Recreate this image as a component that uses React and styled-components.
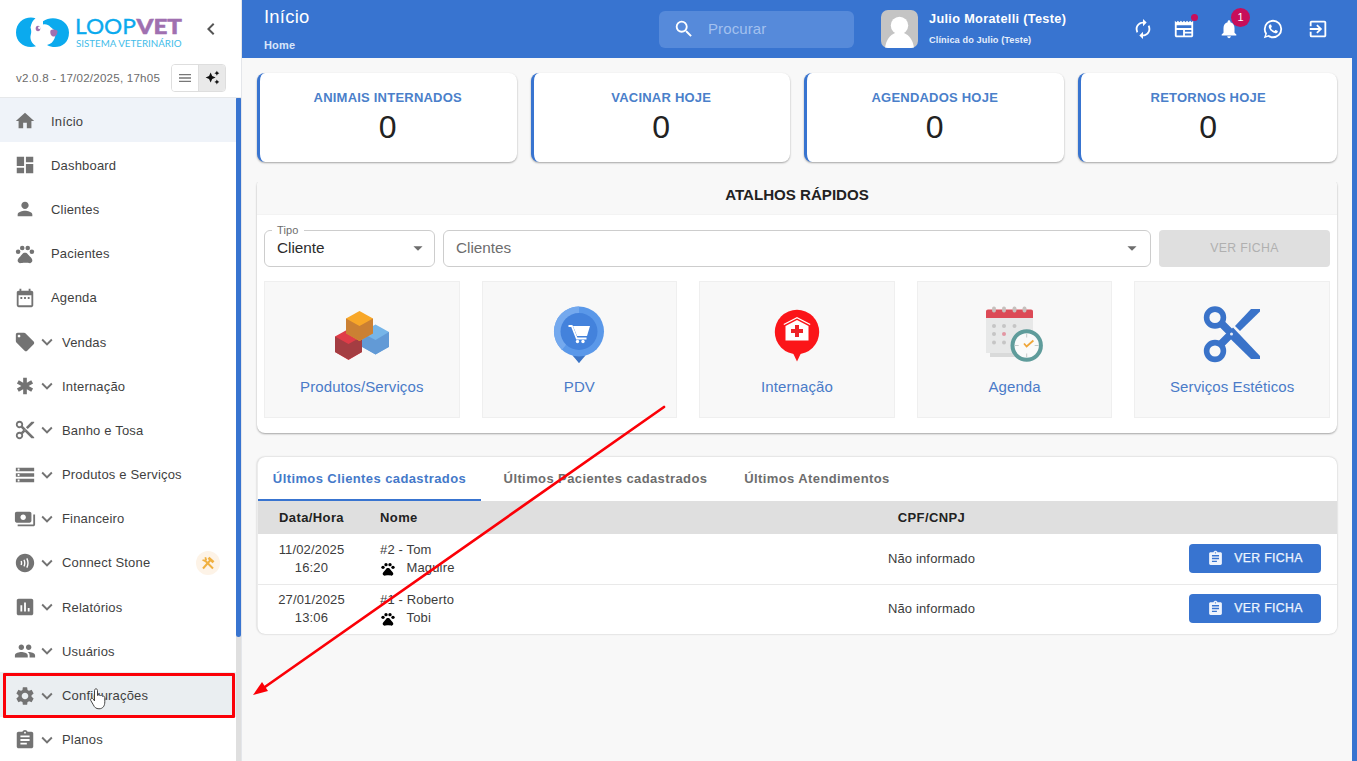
import React from "react";
import styled, { createGlobalStyle } from "styled-components";
import {
  MdHome, MdDashboard, MdPerson, MdPets, MdDateRange, MdLocalOffer, MdEmergency,
  MdContentCut, MdStorage, MdPayments, MdContactless, MdAssessment, MdPeople,
  MdSettings, MdAssignment, MdExpandMore, MdChevronLeft, MdMenu, MdAutoAwesome,
  MdSearch, MdAutorenew, MdNewspaper, MdNotifications, MdExitToApp,
  MdArrowDropDown,
} from "react-icons/md";

const blue = "#3874d0";

const GlobalStyle = createGlobalStyle`
  * { box-sizing: border-box; }
  body { margin: 0; font-family: "Liberation Sans", Arial, sans-serif; background: #f8f8f8; color: #3c3c3c; overflow: hidden; }
  svg { display: block; flex: none; }
`;

const Page = styled.div`
  position: relative;
  display: flex;
  width: 1357px;
  height: 761px;
  overflow: hidden;
`;

/* Sidebar */
const Sidebar = styled.aside`
  display: flex;
  flex-direction: column;
  width: 242px;
  background: #fff;
  border-right: 1px solid #e4e6ea;
  flex: none;
`;
const Brand = styled.div`
  display: flex;
  align-items: center;
  height: 60px;
  padding: 0 18px 0 15px;
  justify-content: space-between;
  color: #555;
`;
const Collapse = styled(MdChevronLeft)`
  margin-bottom: 2px;
`;
const VersionRow = styled.div`
  display: flex;
  align-items: center;
  justify-content: space-between;
  height: 38px;
  padding: 0 15px 2px 16px;
  border-bottom: 1px solid #e6e8ea;
  font-size: 11.6px;
  letter-spacing: 0.21px;
  color: #6c6c6c;
  white-space: nowrap;
`;
const Toggle = styled.div`
  display: flex;
  width: 55px;
  height: 28px;
  border: 1px solid #dedede;
  border-radius: 4px;
  overflow: hidden;
`;
const ToggleButton = styled.div`
  flex: 1;
  display: grid;
  place-items: center;
  color: ${(p) => (p.$on ? "#111" : "#777")};
  background: ${(p) => (p.$on ? "#e9e9e9" : "#fff")};
  border-left: ${(p) => (p.$on ? "1px solid #dedede" : "0")};
`;
const MenuArea = styled.div`
  display: flex;
  flex: 1;
  min-height: 0;
`;
const Menu = styled.nav`
  flex: 1;
  overflow: hidden;
`;
const MenuItem = styled.div`
  display: flex;
  align-items: center;
  height: 44.2px;
  padding: 2px 16px 0 14px;
  font-size: 13px;
  letter-spacing: 0.18px;
  color: #3f3f3f;
  background: ${(p) => (p.$active ? "#eff3f9" : p.$hover ? "#eaeef1" : "transparent")};
  & > svg { color: #737373; }
`;
const MenuLabel = styled.span`
  margin-left: ${(p) => (p.$nested ? "4px" : "15px")};
  flex: 1;
`;
const BetaMark = styled.span`
  display: grid;
  place-items: center;
  width: 24px;
  height: 24px;
  border-radius: 50%;
  background: #fdf3e7;
`;
const Track = styled.div`
  width: 5px;
  background: #dfdfdf;
`;
const Thumb = styled.div`
  height: 539px;
  background: ${blue};
  border-radius: 1px 1px 3px 3px;
`;

/* Header */
const Main = styled.main`
  flex: 1;
  display: flex;
  flex-direction: column;
  min-width: 0;
`;
const Header = styled.header`
  display: flex;
  align-items: center;
  height: 58px;
  padding: 0 28px 0 22px;
  background: ${blue};
  color: #fff;
`;
const Titles = styled.div`
  width: 395px;
  display: flex;
  flex-direction: column;
  gap: 12px;
  padding-bottom: 1px;
`;
const Title = styled.div`
  font-size: 18.4px;
  line-height: 20px;
  letter-spacing: 0.25px;
`;
const Crumb = styled.div`
  font-size: 11px;
  line-height: 12px;
  font-weight: 700;
  letter-spacing: 0.15px;
  color: #d8e6fa;
`;
const SearchBox = styled.div`
  display: flex;
  align-items: center;
  gap: 13px;
  width: 195px;
  height: 37px;
  padding-left: 14px;
  border-radius: 6px;
  background: #568ada;
  font-size: 15px;
`;
const Placeholder = styled.span`
  color: #a3c1ef;
  letter-spacing: 0.1px;
  padding-bottom: 1px;
`;
const User = styled.div`
  display: flex;
  align-items: center;
  margin-left: 27px;
  gap: 11px;
  width: 251px;
`;
const UserText = styled.div`
  display: flex;
  flex-direction: column;
  gap: 7px;
  font-weight: 700;
  white-space: nowrap;
`;
const UserName = styled.div`
  font-size: 12.7px;
  line-height: 15px;
  letter-spacing: 0.34px;
`;
const Clinic = styled.div`
  font-size: 9.2px;
  line-height: 12px;
  letter-spacing: 0.1px;
  color: #e5eefb;
`;
const Actions = styled.div`
  display: grid;
  grid-template-columns: 41px 45px 44px 45px 22px;
  flex: 1;
  align-items: center;
`;
const Action = styled.div`
  position: relative;
  width: 22px;
`;
const Badge = styled.span`
  position: absolute;
  top: -10px;
  right: -10px;
  width: 19px;
  height: 19px;
  border-radius: 50%;
  background: #c70e5a;
  font-size: 11px;
  line-height: 19px;
  text-align: center;
`;
const Dot = styled.span`
  position: absolute;
  top: -4px;
  right: -3px;
  width: 7px;
  height: 7px;
  border-radius: 50%;
  background: #c70e5a;
`;

/* Content */
const Content = styled.div`
  flex: 1;
  padding: 15px 15px 0 15px;
  background: #f8f8f8;
  border-right: 5px solid ${blue};
`;
const Stats = styled.section`
  display: grid;
  grid-template-columns: repeat(4, 1fr);
  gap: 14px;
`;
const StatCard = styled.div`
  height: 89px;
  padding: 16px 1px 0 0;
  text-align: center;
  background: #fff;
  border-left: 3px solid ${blue};
  border-radius: 8px;
  box-shadow: 0 1px 2px rgba(0, 0, 0, 0.34);
`;
const StatLabel = styled.div`
  font-size: 13px;
  line-height: 18px;
  font-weight: 700;
  letter-spacing: 0.22px;
  color: #4a7fca;
`;
const StatValue = styled.div`
  margin-top: 1px;
  font-size: 32px;
  line-height: 39px;
  color: #222;
`;
const Panel = styled.section`
  border-radius: 8px;
  background: #fff;
  box-shadow: 0 1px 2px rgba(0, 0, 0, 0.34);
  overflow: hidden;
`;
const Shortcuts = styled(Panel)`
  margin-top: 16px;
  height: 255px;
  clip-path: inset(4px -3px -4px -3px);
`;
const PanelTitle = styled.div`
  height: 37px;
  background: #f8f8f8;
  border-bottom: 1px solid #f3f3f3;
  text-align: center;
  font-size: 15.1px;
  font-weight: 700;
  line-height: 34px;
  color: #222;
`;
const Filters = styled.div`
  display: flex;
  gap: 8px;
  padding: 15px 7px 14px;
`;
const Field = styled.div`
  position: relative;
  display: flex;
  align-items: center;
  justify-content: space-between;
  width: ${(p) => p.$width};
  height: 37px;
  padding: ${(p) => (p.$muted ? "0 7px 1px 12px" : "0 5px 2px 12px")};
  border: 1px solid #cdcdcd;
  border-radius: 6px;
  font-size: 15.3px;
  color: ${(p) => (p.$muted ? "#6d6d6d" : "#2c2c2c")};
  & > svg { color: #6d6d6d; }
`;
const FieldLabel = styled.span`
  position: absolute;
  top: -8px;
  left: 7px;
  padding: 0 5px;
  background: #fff;
  font-size: 11px;
  line-height: 14px;
  letter-spacing: 0.15px;
  color: #6d6d6d;
`;
const DisabledButton = styled.div`
  flex: 1;
  height: 37px;
  border-radius: 4px;
  background: #dfdfdf;
  color: #b0b0b0;
  font-size: 12.3px;
  line-height: 36px;
  letter-spacing: 0.3px;
  text-align: center;
`;
const Tiles = styled.div`
  display: grid;
  grid-template-columns: repeat(5, 1fr);
  gap: 22px;
  padding: 0 7px;
`;
const Tile = styled.div`
  display: flex;
  flex-direction: column;
  align-items: center;
  height: 137px;
  padding-top: 20px;
  border: 1px solid #efefef;
  background: #f8f8f8;
  color: #4a7bc8;
  font-size: 15px;
  line-height: 20px;
  letter-spacing: 0.1px;
`;
const TileArt = styled.div`
  height: 75px;
`;

const Records = styled(Panel)`
  margin-top: 24px;
  height: 177px;
  border-left: 1px solid #ececec;
  box-shadow: 0 0 2px rgba(0, 0, 0, 0.26);
`;
const Tabs = styled.div`
  display: flex;
  height: 44px;
`;
const Tab = styled.div`
  width: ${(p) => p.$width};
  height: 44px;
  line-height: 43px;
  text-align: center;
  white-space: nowrap;
  font-size: 13px;
  font-weight: 700;
  letter-spacing: 0.4px;
  color: ${(p) => (p.$active ? "#4479c9" : "#6d6d6d")};
  border-bottom: ${(p) => (p.$active ? `2px solid ${blue}` : "0")};
`;
const Row = styled.div`
  display: grid;
  grid-template-columns: 107px 400px 333px 1fr;
  align-items: center;
  height: ${(p) => (p.$head ? "33px" : p.$divided ? "50.5px" : "48.5px")};
  background: ${(p) => (p.$head ? "#dfdfdf" : "#fff")};
  border-bottom: ${(p) => (p.$divided ? "1px solid #e9e9e9" : "0")};
  font-size: 13px;
  line-height: 18.6px;
  font-weight: ${(p) => (p.$head ? 700 : 400)};
  letter-spacing: ${(p) => (p.$head ? "0.4px" : "0.15px")};
  color: ${(p) => (p.$head ? "#222" : "#3c3c3c")};
`;
const Cell = styled.div`
  text-align: ${(p) => (p.$center ? "center" : "left")};
  padding: 1px 0 0 ${(p) => (p.$center ? "0" : "15px")};
`;
const Pet = styled.div`
  display: flex;
  align-items: center;
  gap: 10.5px;
  & > svg { color: #000; }
`;
const RecordButton = styled.div`
  display: flex;
  align-items: center;
  justify-content: center;
  gap: 10px;
  width: 132px;
  height: 29px;
  margin-left: 91px;
  border-radius: 4px;
  background: ${blue};
  color: #eef4fd;
  font-size: 12.3px;
  letter-spacing: 0.3px;
  -webkit-text-stroke: 0.25px #eef4fd;
`;

/* Annotations lie over the page */
const Highlight = styled.div`
  position: absolute;
  left: 3px;
  top: 673px;
  width: 232px;
  height: 45px;
  border: 3px solid #fb0007;
  border-radius: 1px;
`;
const Overlay = styled.svg`
  position: absolute;
  left: 0;
  top: 0;
  pointer-events: none;
`;

const Logo = () => (
  <svg width="170" height="46" viewBox="0 -6 170 46">
    <path fill="#0baaee" d="M20.500 5.200C11 2.500 1 8.500 1 19.500S11 36 21 33.200c-4.500-3-6.300-7-5.300-11.200 1-3 .5-5-.2-7.500.500-4 2.500-7.500 5-9.300z" />
    <path fill="#0baaee" d="M28 8.200C37 1.500 54 6 54 19.500S41 37 32 32c4-1 6-3 7.500-6.500l2-6.500-6-5c-2-2.300-4.500-3-7.500-2.500z" />
    <ellipse cx="23" cy="15.500" rx="2.300" ry="2.800" fill="#a070b0" />
    <circle cx="24.300" cy="14.800" r="1.200" fill="#fff" />
    <path fill="#a070b0" d="M35.500 17.500c1.500-1.500 5-1.500 7 .5 0 3.500-2 6-4.500 5.500-1.800-.5-3.300-3-2.500-6z" />
    <text x="60" y="20.700" fontFamily="Lato, sans-serif" fontSize="20.700" fill="#0baaee" stroke="#0baaee" strokeWidth="0.3" textLength="61" lengthAdjust="spacingAndGlyphs">LOOP</text>
    <text x="121.500" y="20.700" fontFamily="Lato, sans-serif" fontWeight="900" fontSize="20.700" fill="#a070b0" stroke="#a070b0" strokeWidth="0.5" textLength="45.500" lengthAdjust="spacingAndGlyphs">VET</text>
    <text x="61" y="34" fontFamily="Lato, sans-serif" fontSize="9.200" fill="#42bce9" textLength="105.500" lengthAdjust="spacingAndGlyphs">SISTEMA VETERINÁRIO</text>
  </svg>
);

const Avatar = () => (
  <svg width="37" height="38" viewBox="0 0 37 38">
    <clipPath id="avatar"><rect width="37" height="38" rx="7" /></clipPath>
    <g clipPath="url(#avatar)">
      <rect width="37" height="38" fill="#c4c4c4" />
      <circle cx="18.5" cy="15.5" r="8.7" fill="#fff" />
      <path fill="#fff" d="M4 38c1-8 5-13 10-15h9c5 2 9 7 10 15z" />
    </g>
  </svg>
);

const WhatsappIcon = () => (
  <svg width="22" height="22" viewBox="0 0 24 24" fill="currentColor">
    <path d="M16.75 13.96c.25.13.41.2.46.3.06.11.04.61-.21 1.18-.2.56-1.24 1.1-1.7 1.12-.46.02-.47.36-2.96-.73-2.49-1.09-3.99-3.75-4.11-3.92-.12-.17-.96-1.38-.92-2.61.05-1.22.69-1.8.95-2.04.24-.26.51-.29.68-.26h.47c.15 0 .36-.06.55.45l.69 1.87c.06.13.1.28.01.44l-.27.41-.39.42c-.12.12-.26.25-.12.5.12.26.62 1.09 1.32 1.78.91.88 1.71 1.17 1.95 1.3.24.14.39.12.54-.04l.81-.94c.19-.25.35-.19.58-.11l1.67.88M12 2a10 10 0 0 1 10 10 10 10 0 0 1-10 10c-1.97 0-3.8-.57-5.35-1.55L2 22l1.55-4.65A9.969 9.969 0 0 1 2 12 10 10 0 0 1 12 2m0 2a8 8 0 0 0-8 8c0 1.72.54 3.31 1.46 4.61L4.5 19.5l2.89-.96A7.95 7.95 0 0 0 12 20a8 8 0 0 0 8-8 8 8 0 0 0-8-8z" />
  </svg>
);

const ToolsIcon = () => (
  <svg width="14" height="14" viewBox="0 0 14 14" fill="none" stroke="#f0b040">
    <path d="M2 12.500L9.500 4" strokeWidth="2" />
    <path d="M7.500 1.800l5 4.400" strokeWidth="2.800" />
    <path d="M4 4.500l8 8" strokeWidth="2" />
    <path d="M1.500 4l2.200.800 1.300-1.300-.700-2.200" strokeWidth="1.800" />
  </svg>
);

const BoxesArt = () => (
  <svg width="56" height="62" viewBox="0 0 56 62">
    <path fill="#76b5e8" d="M41.5 22.5L55 30v14.500l-13.500 8L28 44.500V30z" />
    <path fill="#629ad6" d="M28 31l13.500 7L55 30v15l-13.500 7.500L28 45z" />
    <path fill="#e03c48" d="M14.500 27L28 34.500V50l-13.500 8L1 50V34.500z" />
    <path fill="#a43d42" d="M1 34.500L14.500 42 28 34.500V50l-13.500 7.500L1 50z" />
    <path fill="#f8a728" d="M25.500 9L39 16.500V31l-13.500 8L12 31V16.500z" />
    <path fill="#cb8033" d="M12 16.500L25.500 24 39 16.500V31.500L25.500 39 12 31.500z" />
  </svg>
);

const CartArt = () => (
  <svg width="52" height="62" viewBox="0 0 52 62">
    <path fill="#5a98e9" d="M12 49c8 3 11 7 14 12 3-5 6-9 14-12z" />
    <path fill="#3c74c4" d="M19.500 53.500h13L26 61z" />
    <circle cx="26" cy="29.500" r="25" fill="#5a98e9" />
    <path fill="#74a9ee" d="M26 4.500a25 25 0 0 0-17 43.300l9-11 8-26z" />
    <circle cx="26" cy="29.500" r="18.500" fill="#4382dc" />
    <path fill="none" stroke="#fff" strokeWidth="1.8" d="M15.500 24h3.300l5 12.500h9.700" />
    <path fill="#fff" d="M20 24h17l-3 10H24z" />
    <circle cx="24.500" cy="39.500" r="1.7" fill="#fff" />
    <circle cx="30" cy="39.500" r="1.7" fill="#fff" />
  </svg>
);

const HospitalArt = () => (
  <svg width="46" height="62" viewBox="0 0 46 62">
    <path fill="#fb1519" d="M17.500 48h11L23 59.500z" />
    <circle cx="23" cy="30" r="22.200" fill="#fb1519" />
    <path fill="#fff" d="M11.500 24L23 18l11.500 6v14.500h-23z" />
    <path fill="none" stroke="#fff" strokeWidth="1.400" d="M9.800 22.500L23 15.700l13.200 6.800" />
    <path fill="none" stroke="#ee2228" strokeWidth="4" d="M23 23v12M17 29h12" />
  </svg>
);

const CalendarArt = () => (
  <svg width="60" height="62" viewBox="0 0 60 62">
    <path fill="#d9dada" d="M5 49h29v6H5z" />
    <path fill="#e7e8e8" d="M1 8h47v43H1z" />
    <path fill="#dc4a56" d="M1 9.500A2 2 0 0 1 3 7.500h43a2 2 0 0 1 2 2V16H1z" />
    {[9, 19, 29.500, 39.500].map((x) => (
      <rect key={x} x={x - 1.900} y="4.500" width="3.800" height="6" rx="1.700" fill="#c7c0bd" />
    ))}
    {[24, 32, 40.500].map((y, row) =>
      [9, 19, 29.500].slice(0, row === 0 ? 3 : 2).map((x) => (
        <circle key={`${x}-${y}`} cx={x} cy={y} r="2" fill={row === 1 && x === 19 ? "#e296a2" : "#c5c5c5"} />
      ))
    )}
    <circle cx="41.700" cy="43.500" r="14.200" fill="#fafafa" stroke="#5f9c9b" strokeWidth="4" />
    <path fill="none" stroke="#c5c9c9" strokeWidth="1" d="M41.700 31.500v4M41.700 51.500v4M29.700 43.500h4M49.700 43.500h4" />
    <path fill="none" stroke="#f0a63a" strokeWidth="1.800" d="M39 41.500l2.600 3 6.800-6" />
  </svg>
);

const ScissorsArt = () => (
  <svg width="58" height="62" viewBox="0 0 58 62">
    <path fill="#3a73c9" d="M57 7v2.500L37 29l-5-5L48 7z" />
    <path fill="none" stroke="#3a73c9" strokeWidth="7.500" d="M17 20l12 12M17 43l11-11" />
    <path fill="#3a73c9" d="M30 25.500L57 54v3h-9L23.500 33z" />
    <circle cx="12" cy="15.500" r="8.400" fill="#f8f8f8" stroke="#3a73c9" strokeWidth="5.600" />
    <circle cx="12" cy="49" r="8.400" fill="#f8f8f8" stroke="#3a73c9" strokeWidth="5.600" />
    <circle cx="28.500" cy="32" r="1.500" fill="#e8eef8" />
  </svg>
);

const menu = [
  { label: "Início", icon: MdHome, active: true },
  { label: "Dashboard", icon: MdDashboard },
  { label: "Clientes", icon: MdPerson },
  { label: "Pacientes", icon: MdPets },
  { label: "Agenda", icon: MdDateRange },
  { label: "Vendas", icon: MdLocalOffer, nested: true },
  { label: "Internação", icon: MdEmergency, nested: true },
  { label: "Banho e Tosa", icon: MdContentCut, nested: true },
  { label: "Produtos e Serviços", icon: MdStorage, nested: true },
  { label: "Financeiro", icon: MdPayments, nested: true },
  { label: "Connect Stone", icon: MdContactless, nested: true, beta: true },
  { label: "Relatórios", icon: MdAssessment, nested: true },
  { label: "Usuários", icon: MdPeople, nested: true },
  { label: "Configurações", icon: MdSettings, nested: true, hover: true },
  { label: "Planos", icon: MdAssignment, nested: true },
];

const stats = ["ANIMAIS INTERNADOS", "VACINAR HOJE", "AGENDADOS HOJE", "RETORNOS HOJE"];

const shortcuts = [
  ["Produtos/Serviços", BoxesArt],
  ["PDV", CartArt],
  ["Internação", HospitalArt],
  ["Agenda", CalendarArt],
  ["Serviços Estéticos", ScissorsArt],
];

const records = [
  { date: "11/02/2025", time: "16:20", name: "#2 - Tom", pet: "Maguire" },
  { date: "27/01/2025", time: "13:06", name: "#1 - Roberto", pet: "Tobi" },
];

export default function App() {
  return (
    <Page>
      <GlobalStyle />
      <Sidebar>
        <Brand>
          <Logo />
          <Collapse size={24} />
        </Brand>
        <VersionRow>
          v2.0.8 - 17/02/2025, 17h05
          <Toggle>
            <ToggleButton><MdMenu size={16} /></ToggleButton>
            <ToggleButton $on><MdAutoAwesome size={15} /></ToggleButton>
          </Toggle>
        </VersionRow>
        <MenuArea>
          <Menu>
            {menu.map(({ label, icon: Icon, nested, active, hover, beta }) => (
              <MenuItem key={label} $active={active} $hover={hover}>
                <Icon size={22} />
                {nested && <MdExpandMore size={22} />}
                <MenuLabel $nested={nested}>{label}</MenuLabel>
                {beta && <BetaMark><ToolsIcon /></BetaMark>}
              </MenuItem>
            ))}
          </Menu>
          <Track><Thumb /></Track>
        </MenuArea>
      </Sidebar>

      <Main>
        <Header>
          <Titles>
            <Title>Início</Title>
            <Crumb>Home</Crumb>
          </Titles>
          <SearchBox>
            <MdSearch size={22} />
            <Placeholder>Procurar</Placeholder>
          </SearchBox>
          <User>
            <Avatar />
            <UserText>
              <UserName>Julio Moratelli (Teste)</UserName>
              <Clinic>Clínica do Julio (Teste)</Clinic>
            </UserText>
          </User>
          <Actions>
            <Action><MdAutorenew size={22} /></Action>
            <Action><MdNewspaper size={22} /><Dot /></Action>
            <Action><MdNotifications size={22} /><Badge>1</Badge></Action>
            <Action><WhatsappIcon /></Action>
            <Action><MdExitToApp size={22} /></Action>
          </Actions>
        </Header>

        <Content>
          <Stats>
            {stats.map((label) => (
              <StatCard key={label}>
                <StatLabel>{label}</StatLabel>
                <StatValue>0</StatValue>
              </StatCard>
            ))}
          </Stats>

          <Shortcuts>
            <PanelTitle>ATALHOS RÁPIDOS</PanelTitle>
            <Filters>
              <Field $width="171px">
                <FieldLabel>Tipo</FieldLabel>
                Cliente
                <MdArrowDropDown size={22} />
              </Field>
              <Field $width="708px" $muted>
                Clientes
                <MdArrowDropDown size={22} />
              </Field>
              <DisabledButton>VER FICHA</DisabledButton>
            </Filters>
            <Tiles>
              {shortcuts.map(([label, Art]) => (
                <Tile key={label}>
                  <TileArt><Art /></TileArt>
                  {label}
                </Tile>
              ))}
            </Tiles>
          </Shortcuts>

          <Records>
            <Tabs>
              <Tab $width="223px" $active>Últimos Clientes cadastrados</Tab>
              <Tab $width="249px">Últimos Pacientes cadastrados</Tab>
              <Tab $width="174px">Últimos Atendimentos</Tab>
            </Tabs>
            <Row $head>
              <Cell $center>Data/Hora</Cell>
              <Cell>Nome</Cell>
              <Cell $center>CPF/CNPJ</Cell>
              <Cell />
            </Row>
            {records.map((r, i) => (
              <Row key={r.date} $divided={i < records.length - 1}>
                <Cell $center>{r.date}<br />{r.time}</Cell>
                <Cell>
                  {r.name}
                  <Pet><MdPets size={16} />{r.pet}</Pet>
                </Cell>
                <Cell $center>Não informado</Cell>
                <RecordButton><MdAssignment size={17} />VER FICHA</RecordButton>
              </Row>
            ))}
          </Records>
        </Content>
      </Main>

      <Highlight />
      <Overlay width="1357" height="761" viewBox="0 0 1357 761">
        <path d="M664 407L262 689" fill="none" stroke="#fb0007" strokeWidth="2.700" strokeLinecap="round" />
        <path d="M253 695l9-13 6 9z" fill="#fb0007" />
        <path
          d="M94.500 701v-10.500c0-2.200 3-2.200 3 0v5c.6-1 2.300-.8 2.600.3.700-.8 2.200-.5 2.500.6.800-.6 2.200-.1 2.200 1.200v4.200c0 4-1.800 7-5.800 7-3 0-4.500-1.500-5.700-4l-2.600-4.500c-.8-1.800 1.500-2.800 2.600-1.300z"
          fill="#fff" stroke="#444" strokeWidth="1" strokeLinejoin="round"
        />
      </Overlay>
    </Page>
  );
}
